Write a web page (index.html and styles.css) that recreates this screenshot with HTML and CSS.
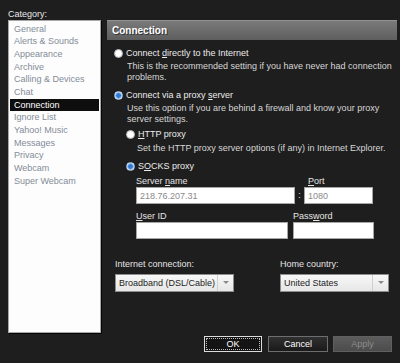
FILE: index.html
```html
<!DOCTYPE html>
<html>
<head>
<meta charset="utf-8">
<title>Preferences - Connection</title>
<link rel="stylesheet" href="styles.css">
</head>
<body>
<div class="dialog">
	<div class="main">
		<div class="side">
			<div class="side_label">Category:</div>
			<ul class="cats">
				<li>General</li>
				<li>Alerts &amp; Sounds</li>
				<li>Appearance</li>
				<li>Archive</li>
				<li>Calling &amp; Devices</li>
				<li>Chat</li>
				<li class="sel">Connection</li>
				<li>Ignore List</li>
				<li>Yahoo! Music</li>
				<li>Messages</li>
				<li>Privacy</li>
				<li>Webcam</li>
				<li>Super Webcam</li>
			</ul>
		</div>
		<div class="panel">
			<div class="panel_head">Connection</div>

			<div class="opt opt1">
				<div class="opt_label"><span class="radio"></span><span>Connect <u>d</u>irectly to the Internet</span></div>
				<p class="desc">This is the recommended setting if you have never had connection<br>problems.</p>
			</div>

			<div class="opt opt2">
				<div class="opt_label"><span class="radio on"></span><span>Connect via a proxy <u>s</u>erver</span></div>
				<p class="desc">Use this option if you are behind a firewall and know your proxy<br>server settings.</p>
			</div>

			<div class="sub sub_http">
				<div class="opt_label"><span class="radio"></span><span><u>H</u>TTP proxy</span></div>
				<p class="desc">Set the HTTP proxy server options (if any) in Internet Explorer.</p>
			</div>

			<div class="sub sub_socks">
				<div class="opt_label"><span class="radio on"></span><span>S<u>O</u>CKS proxy</span></div>
			</div>

			<div class="fields fields_server">
				<div class="field f_server">
					<label>Server <u>n</u>ame</label>
					<input type="text" value="218.76.207.31">
				</div>
				<div class="colon">:</div>
				<div class="field f_port">
					<label><u>P</u>ort</label>
					<input type="text" value="1080">
				</div>
			</div>

			<div class="fields fields_user">
				<div class="field f_user">
					<label><u>U</u>ser ID</label>
					<input type="text" value="">
				</div>
				<div class="field f_pass">
					<label>Pass<u>w</u>ord</label>
					<input type="password" value="">
				</div>
			</div>

			<div class="fields fields_select">
				<div class="field f_conn">
					<label>Internet connection:</label>
					<div class="select"><span class="select_text">Broadband (DSL/Cable)</span><span class="select_btn"></span></div>
				</div>
				<div class="field f_country">
					<label>Home country:</label>
					<div class="select"><span class="select_text">United States</span><span class="select_btn"></span></div>
				</div>
			</div>
		</div>
	</div>
	<div class="buttons">
		<button class="btn btn_ok">OK</button>
		<button class="btn btn_cancel">Cancel</button>
		<button class="btn btn_apply" disabled>Apply</button>
	</div>
</div>
</body>
</html>
```

FILE: styles.css
```css
* {box-sizing:border-box;}
body {margin:0; background:#1e1e1e; color:#e4e4e4; font-family:"Liberation Sans", Arial, sans-serif; font-size:9px; line-height:11px;}
p {margin:0;}
u {text-decoration:underline;}

.dialog {width:400px; height:363px; display:flex; flex-direction:column;}
.main {display:flex; height:333px;}

/* category list */
.side {width:93px; margin-left:8px; padding-top:9px; display:flex; flex-direction:column;}
.side_label {height:11px; color:#e8e8e8;}
.cats {flex:1; margin:0; padding:1.7px 1px 0 1px; list-style:none; background:#fdfdfd; border:1px solid #a8a8a8; box-shadow:1px 1px 0 #050505;}
.cats li {height:12.67px; line-height:12.67px; padding-left:4px; color:#848c98; white-space:nowrap;}
.cats li.sel {background:#0e0e0e; color:#fff;}

/* right panel */
.panel {width:290px; margin-left:6px; padding-top:20px;}
.panel_head {height:20px; line-height:19px; padding-left:5px; font-size:10px; font-weight:bold; color:#fff; background:linear-gradient(#7a7a7a,#5e5e5e); border-top:1px solid #929292; text-shadow:1px 1px 0 #333;}

.opt_label {display:flex; align-items:center; height:11px; color:#ececec;}
.radio {display:inline-block; width:9px; height:9px; margin-right:3px; border-radius:50%; background:#fff; border:1px solid #b0b0b0;}
.radio.on {background:radial-gradient(circle, #2f7ad4 0 2px, #8fbbea 2.6px 3px, #fff 3.5px); border-color:#a8c4e2;}
.desc {color:#d6d6d6;}

.opt .radio {margin-left:7px;}
.opt .desc {margin:2px 0 0 20px;}
.opt1 {margin-top:8px;}
.opt2 {margin-top:6.5px;}

.sub .radio {margin-left:19px;}
.sub .desc {margin:3px 0 0 30px;}
.sub_http {margin-top:4px;}
.sub_socks {margin-top:7px;}

/* text fields */
.fields {display:flex; margin-left:29px;}
.field {display:flex; flex-direction:column;}
.field label {height:11px; color:#e4e4e4;}
.field input {height:17px; margin:0; padding:0 0 0 3px; border:1px solid #a6a6a6; background:#fff; color:#8a8a8a; font-family:inherit; font-size:9px; outline:none;}
.fields_server {margin-top:4.5px;}
.f_server input {width:159px;}
.colon {width:9px; padding-top:14px; text-align:center; color:#e4e4e4;}
.f_port label {padding-left:4px;}
.f_port input {width:69px;}
.fields_user {margin-top:7px;}
.f_user input {width:152px;}
.f_pass {margin-left:5px;}
.f_pass input {width:81px;}

/* drop downs */
.fields_select {margin:20px 0 0 8px;}
.fields_select label {margin-bottom:4px;}
.select {display:flex; height:18px; border:1px solid #8e8e8e; background:linear-gradient(#f8f8f8,#e6e6e6); color:#1c1c1c;}
.select_text {flex:1; line-height:16px; padding-left:3px; white-space:nowrap;}
.select_btn {position:relative; width:16px; border-left:1px solid #d0d0d0;}
.select_btn:after {content:""; position:absolute; left:5px; top:6px; border-left:3px solid transparent; border-right:3px solid transparent; border-top:3px solid #8a8a8a;}
.f_conn .select {width:119px;}
.f_country {margin-left:46px;}
.f_country .select {width:109px;}

/* buttons */
.buttons {display:flex; justify-content:flex-end; margin-top:3px; padding-right:8px;}
.btn {height:16px; margin:0; padding:0; font-family:inherit; font-size:9px; line-height:14px; text-align:center; color:#fff;}
.btn_ok {width:58px; background:#141414; border:1px solid #dcdcdc; outline:1px dotted #bdbdbd; outline-offset:-3px;}
.btn_cancel {width:60px; margin-left:6px; background:linear-gradient(#303030,#1a1a1a); border:1px solid #6e6e6e;}
.btn_apply {width:59px; margin-left:5px; background:linear-gradient(#5c5c5c,#4c4c4c); border:1px solid #606060; color:#8c8c8c;}
```
